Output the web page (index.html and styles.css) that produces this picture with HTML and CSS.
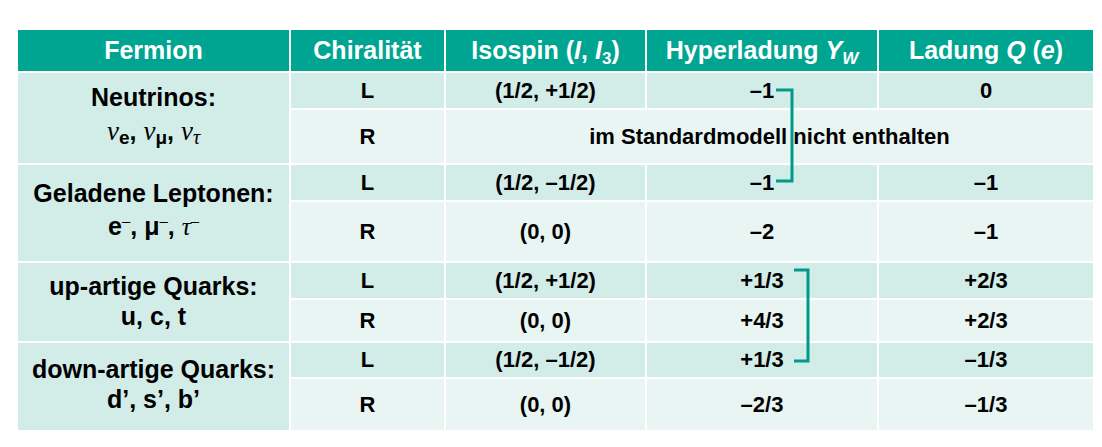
FILE: index.html
```html
<!DOCTYPE html>
<html lang="de">
<head>
<meta charset="utf-8">
<title>Fermionen</title>
<link rel="stylesheet" href="styles.css">
</head>
<body>
<div class="page">
  <div class="ft">
    <div class="th"><span>Fermion</span></div>
    <div class="th"><span>Chiralität</span></div>
    <div class="th"><span>Isospin (<i>I</i>, <i>I</i><sub class="hsub">3</sub>)</span></div>
    <div class="th"><span>Hyperladung <i>Y<sub class="hsub">W</sub></i></span></div>
    <div class="th"><span>Ladung <i>Q</i> (<i>e</i>)</span></div>

    <div class="lab lab-n">
      <div class="lab-main">Neutrinos:</div>
      <div class="lab-sub sub-n"><span class="gr nu">ν</span><sub class="ls">e</sub>, <span class="gr nu">ν</span><sub class="ls">μ</sub>, <span class="gr nu">ν</span><sub class="ls gr">τ</sub></div>
    </div>
    <div class="td dk">L</div><div class="td dk">(1/2, +1/2)</div><div class="td dk">–1</div><div class="td dk">0</div>
    <div class="td lt">R</div><div class="td lt span3">im Standardmodell nicht enthalten</div>

    <div class="lab lab-g">
      <div class="lab-main">Geladene Leptonen:</div>
      <div class="lab-sub sub-g">e<sup class="mn">–</sup>, μ<sup class="mn">–</sup>, <span class="gr">τ</span><sup class="mn">–</sup></div>
    </div>
    <div class="td dk">L</div><div class="td dk">(1/2, –1/2)</div><div class="td dk">–1</div><div class="td dk">–1</div>
    <div class="td lt">R</div><div class="td lt">(0, 0)</div><div class="td lt">–2</div><div class="td lt">–1</div>

    <div class="lab lab-u">
      <div class="lab-main">up-artige Quarks:</div>
      <div class="lab-sub">u, c, t</div>
    </div>
    <div class="td dk">L</div><div class="td dk">(1/2, +1/2)</div><div class="td dk">+1/3</div><div class="td dk">+2/3</div>
    <div class="td lt">R</div><div class="td lt">(0, 0)</div><div class="td lt">+4/3</div><div class="td lt">+2/3</div>

    <div class="lab lab-d">
      <div class="lab-main">down-artige Quarks:</div>
      <div class="lab-sub">d’, s’, b’</div>
    </div>
    <div class="td dk">L</div><div class="td dk">(1/2, –1/2)</div><div class="td dk">+1/3</div><div class="td dk">–1/3</div>
    <div class="td lt">R</div><div class="td lt">(0, 0)</div><div class="td lt">–2/3</div><div class="td lt">–1/3</div>
  </div>

  <svg class="brace brace-lep" width="20" height="96" viewBox="0 0 20 96" aria-hidden="true">
    <path d="M1 2 H17 V93 H1"/>
  </svg>
  <svg class="brace brace-q" width="20" height="96" viewBox="0 0 20 96" aria-hidden="true">
    <path d="M1 2 H15 V93 H1"/>
  </svg>
</div>
</body>
</html>
```

FILE: styles.css
```css
html, body {
  margin: 0;
  padding: 0;
  background: #ffffff;
}

body {
  font-family: "Liberation Sans", Arial, sans-serif;
}

.page {
  position: relative;
  width: 1102px;
  height: 447px;
  padding: 30px 0 0 18px;
  box-sizing: border-box;
  overflow: hidden;
}

.ft {
  display: grid;
  width: 1075px;
  grid-template-columns: 271px 153px 199px 230px 214px;
  grid-template-rows: 41px 35px 53px 35px 59px 35px 41px 34px 51px;
  gap: 2px;
  background: #ffffff;
  font-weight: bold;
  color: #000000;
}

.th {
  display: flex;
  align-items: center;
  justify-content: center;
  background: #00a592;
  color: #ffffff;
  font-size: 25px;
  white-space: nowrap;
}

.td {
  display: flex;
  align-items: center;
  justify-content: center;
  font-size: 22px;
  white-space: nowrap;
}

.dk { background: #d2ece8; }
.lt { background: #e9f5f3; }

.span3 { grid-column: span 3; }

.lab {
  grid-row: span 2;
  background: #d2ece8;
  text-align: center;
  font-size: 25px;
  white-space: nowrap;
}

.lab-n { padding-top: 9px; }
.lab-g { padding-top: 13px; }
.lab-u { padding-top: 8px; }
.lab-d { padding-top: 11px; }

.lab-main,
.lab-sub {
  height: 30px;
  line-height: 30px;
}

.sub-n { margin-top: 4px; }
.sub-g { margin-top: 3px; }

.gr {
  font-family: "Liberation Serif", "Times New Roman", serif;
  font-style: italic;
  font-weight: normal;
}

.nu {
  font-size: 27px;
}

.ls {
  font-size: 19px;
  line-height: 0;
  vertical-align: -4px;
}

.ls.gr {
  font-size: 20px;
}

.mn {
  font-size: 15px;
  line-height: 0;
  vertical-align: 9px;
  font-weight: normal;
}

.hsub {
  font-size: 17px;
  line-height: 0;
  vertical-align: -5px;
}

.brace {
  position: absolute;
  fill: none;
  stroke: #009a88;
  stroke-width: 3;
}

.brace path {
  stroke-linejoin: miter;
}

.brace-lep {
  left: 775px;
  top: 88px;
}

.brace-q {
  left: 793px;
  top: 268px;
}
```
